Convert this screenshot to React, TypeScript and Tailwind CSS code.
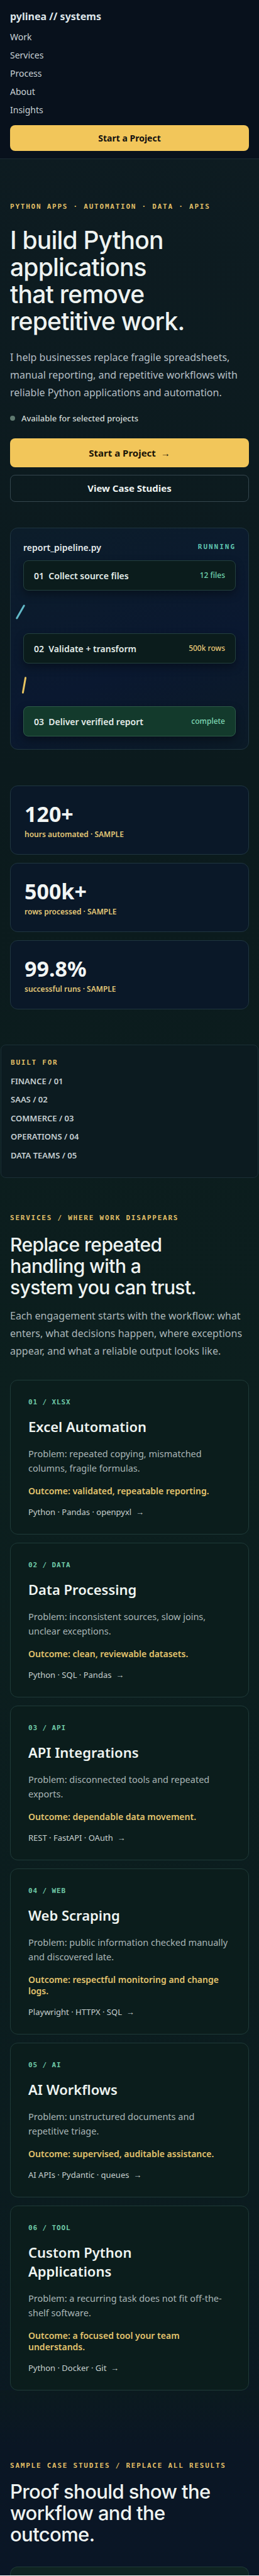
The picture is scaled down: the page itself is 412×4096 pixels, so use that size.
import React from 'react';

const navItems = ['Work', 'Services', 'Process', 'About', 'Insights'];

const steps = [
  { n: '01', label: 'Collect source files', meta: '12 files', metaColor: 'text-[#6fd6b0]', box: 'bg-[#0b1c1c] border-[#23403e]' },
  { n: '02', label: 'Validate + transform', meta: '500k rows', metaColor: 'text-[#e8c877]', box: 'bg-[#0b1c1c] border-[#23403e]' },
  { n: '03', label: 'Deliver verified report', meta: 'complete', metaColor: 'text-[#7fd8b3]', box: 'bg-[#133a2c] border-[#2d5b48]' },
];

const stats = [
  { value: '120+', label: 'hours automated' },
  { value: '500k+', label: 'rows processed' },
  { value: '99.8%', label: 'successful runs' },
];

const industries = ['FINANCE / 01', 'SAAS / 02', 'COMMERCE / 03', 'OPERATIONS / 04', 'DATA TEAMS / 05'];

const services = [
  {
    tag: '01 / XLSX',
    title: ['Excel Automation'],
    problem: 'Problem: repeated copying, mismatched columns, fragile formulas.',
    outcome: 'Outcome: validated, repeatable reporting.',
    tech: 'Python · Pandas · openpyxl',
  },
  {
    tag: '02 / DATA',
    title: ['Data Processing'],
    problem: 'Problem: inconsistent sources, slow joins, unclear exceptions.',
    outcome: 'Outcome: clean, reviewable datasets.',
    tech: 'Python · SQL · Pandas',
  },
  {
    tag: '03 / API',
    title: ['API Integrations'],
    problem: 'Problem: disconnected tools and repeated exports.',
    outcome: 'Outcome: dependable data movement.',
    tech: 'REST · FastAPI · OAuth',
  },
  {
    tag: '04 / WEB',
    title: ['Web Scraping'],
    problem: 'Problem: public information checked manually and discovered late.',
    outcome: 'Outcome: respectful monitoring and change logs.',
    tech: 'Playwright · HTTPX · SQL',
  },
  {
    tag: '05 / AI',
    title: ['AI Workflows'],
    problem: 'Problem: unstructured documents and repetitive triage.',
    outcome: 'Outcome: supervised, auditable assistance.',
    tech: 'AI APIs · Pydantic · queues',
  },
  {
    tag: '06 / TOOL',
    title: ['Custom Python', 'Applications'],
    problem: 'Problem: a recurring task does not fit off-the-shelf software.',
    outcome: 'Outcome: a focused tool your team understands.',
    tech: 'Python · Docker · Git',
  },
];

const Eyebrow: React.FC<{ children: React.ReactNode }> = ({ children }) => (
  <div className="font-['DejaVu_Sans_Mono',monospace] text-[11px] font-bold tracking-[0.16em] text-[#e1bf66]">
    {children}
  </div>
);

const Header: React.FC = () => (
  <header className="bg-[#08111c] border-b border-[#1c2b33] px-4 pt-[14px] pb-3">
    <div className="text-[16px] font-bold text-[#dfe6ea] leading-6">pylinea // systems</div>
    <nav className="mt-[6px] flex flex-col">
      {navItems.map((item) => (
        <a key={item} className="h-[29px] flex items-center text-[14px] text-[#c9d1d6]">
          {item}
        </a>
      ))}
    </nav>
    <button className="mt-[10px] w-full h-[41px] rounded-lg bg-[#f2c65a] text-[#111] text-[14px] font-bold">
      Start a Project
    </button>
  </header>
);

const Pipeline: React.FC = () => (
  <div className="mt-[41px] rounded-xl border border-[#1f3540] bg-[linear-gradient(160deg,#0c1d2a,#0a1830_60%,#0b1a26)] px-5 pt-5 pb-5">
    <div className="flex items-center justify-between">
      <span className="text-[14px] font-semibold text-[#e3e9ec]">report_pipeline.py</span>
      <span className="font-['DejaVu_Sans_Mono',monospace] text-[11px] font-bold tracking-[0.18em] text-[#5fc4b0]">
        RUNNING
      </span>
    </div>
    <div className="mt-[10px] flex flex-col">
      {steps.map((s, i) => (
        <React.Fragment key={s.n}>
          {i === 1 && (
            <div className="h-[68px] flex items-center">
              <div className="ml-[-6px] w-[3px] h-[26px] rounded-full bg-[#62b9c8] rotate-[30deg]" />
            </div>
          )}
          {i === 2 && (
            <div className="h-[68px] flex items-center">
              <div className="ml-0 w-[3px] h-[27px] rounded-full bg-[#e6c260] rotate-[10deg]" />
            </div>
          )}
          <div
            className={`h-[48px] rounded-lg border px-4 flex items-center justify-between shadow-[0_6px_14px_rgba(0,0,0,0.35)] ${s.box}`}
          >
            <span className="text-[14px] font-semibold text-[#e3ece9]">
              {s.n}&nbsp; {s.label}
            </span>
            <span className={`text-[12px] font-medium ${s.metaColor}`}>{s.meta}</span>
          </div>
        </React.Fragment>
      ))}
    </div>
  </div>
);

const Hero: React.FC = () => (
  <section className="px-4 pt-[68px]">
    <Eyebrow>PYTHON APPS · AUTOMATION · DATA · APIS</Eyebrow>
    <h1 className="mt-[22px] font-['Inter',sans-serif] text-[39px] leading-[43px] font-medium tracking-[-0.02em] text-[#eef3f1]">
      <span className="block">I build Python</span>
      <span className="block">applications</span>
      <span className="block">that remove</span>
      <span className="block">repetitive work.</span>
    </h1>
    <p className="mt-[22px] text-[16px] leading-[28px] text-[#b5bfc5]">
      I help businesses replace fragile spreadsheets, manual reporting, and repetitive workflows with reliable Python
      applications and automation.
    </p>
    <div className="mt-[18px] flex items-center gap-[10px]">
      <span className="w-2 h-2 rounded-full bg-[#5f7a70]" />
      <span className="text-[13px] font-medium text-[#d3dad8]">Available for selected projects</span>
    </div>
    <button className="mt-[22px] w-full h-[46px] rounded-lg bg-[#f2c65a] text-[#1a1407] text-[15px] font-bold">
      Start a Project &nbsp;→
    </button>
    <button className="mt-3 w-full h-[43px] rounded-lg border border-[#34464e] text-[#eef3f1] text-[15px] font-bold">
      View Case Studies
    </button>
    <Pipeline />
  </section>
);

const Stats: React.FC = () => (
  <section className="px-4 pt-[57px] flex flex-col gap-[13px]">
    {stats.map((s) => (
      <div key={s.value} className="h-[110px] rounded-xl border border-[#1f3540] bg-[#0a1828] px-[22px] pt-[24px]">
        <div className="text-[34px] leading-[40px] font-bold text-[#f1f5f4]">{s.value}</div>
        <div className="mt-[4px] text-[12px] font-semibold text-[#e3c777]">{s.label} · SAMPLE</div>
      </div>
    ))}
  </section>
);

const BuiltFor: React.FC = () => (
  <section className="mt-[56px] mx-px rounded-lg border border-[#1b2f36] bg-[#0c1b20] px-[15px] pt-[20px] pb-[20px]">
    <Eyebrow>BUILT FOR</Eyebrow>
    <div className="mt-[6px] flex flex-col">
      {industries.map((item) => (
        <div key={item} className="h-[29.5px] flex items-center text-[13px] font-semibold text-[#c6cfd2]">
          {item}
        </div>
      ))}
    </div>
  </section>
);

const ServiceCard: React.FC<{ s: (typeof services)[number] }> = ({ s }) => (
  <div className="rounded-xl border border-[#1f3a38] bg-[#0b1d1c] px-[28px] pt-[28px] pb-[26px]">
    <div className="font-['DejaVu_Sans_Mono',monospace] text-[11px] leading-[13px] font-bold tracking-[0.08em] text-[#6fcaa8]">
      {s.tag}
    </div>
    <h3 className="mt-[17px] text-[22px] leading-[30px] font-semibold text-[#eef4f1]">
      {s.title.map((t) => (
        <div key={t}>{t}</div>
      ))}
    </h3>
    <p className="mt-[17px] text-[14.5px] leading-[23px] text-[#a9b5b6]">{s.problem}</p>
    <p className="mt-[16px] text-[14px] leading-[18px] font-semibold text-[#e3c36d]">{s.outcome}</p>
    <div className="mt-[15px] text-[13px] leading-[18px] text-[#c7d0cf]">{s.tech} &nbsp;→</div>
  </div>
);

const Services: React.FC = () => (
  <section className="px-4 pt-[56px]">
    <Eyebrow>SERVICES / WHERE WORK DISAPPEARS</Eyebrow>
    <h2 className="mt-[16px] font-['Inter',sans-serif] text-[30px] leading-[34px] font-medium tracking-[-0.02em] text-[#eef3f1]">
      <span className="block">Replace repeated</span>
      <span className="block">handling with a</span>
      <span className="block">system you can trust.</span>
    </h2>
    <p className="mt-[14px] text-[16px] leading-[28px] text-[#aab5b8]">
      Each engagement starts with the workflow: what enters, what decisions happen, where exceptions appear, and what a
      reliable output looks like.
    </p>
    <div className="mt-[32px] flex flex-col gap-[13px]">
      {services.map((s) => (
        <ServiceCard key={s.tag} s={s} />
      ))}
    </div>
  </section>
);

const CaseStudies: React.FC = () => (
  <section className="px-4 pt-[112px] bg-[linear-gradient(180deg,#0b1a1f,#0a1624_30%,#0a1626)]">
    <Eyebrow>SAMPLE CASE STUDIES / REPLACE ALL RESULTS</Eyebrow>
    <h2 className="mt-[16px] font-['Inter',sans-serif] text-[31px] leading-[34px] font-medium tracking-[-0.02em] text-[#eef3f1]">
      <span className="block">Proof should show the</span>
      <span className="block">workflow and the</span>
      <span className="block">outcome.</span>
    </h2>
    <div className="mt-[34px] h-[14px] rounded-t-xl border border-b-0 border-[#1f3a38] bg-[#0f2422]" />
  </section>
);

export default function App() {
  return (
    <div className="font-['Noto_Sans','Open_Sans',sans-serif] bg-[linear-gradient(180deg,#0e1c22_0%,#0b1a1d_30%,#0c1f1e_55%,#0b1c1f_85%,#0a1624_100%)]">
      <Header />
      <Hero />
      <Stats />
      <BuiltFor />
      <Services />
      <CaseStudies />
    </div>
  );
}
